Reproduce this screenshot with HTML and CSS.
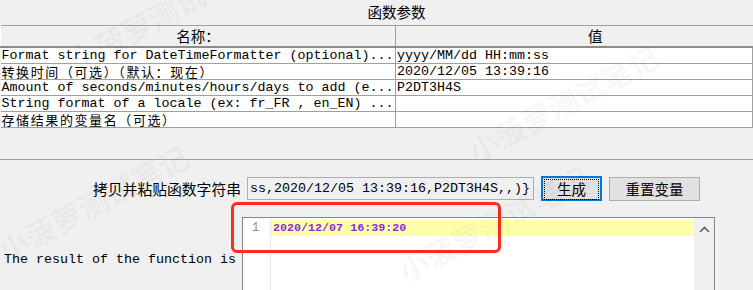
FILE: index.html
```html
<!DOCTYPE html>
<html lang="zh-CN">
<head>
    <meta charset="UTF-8">
    <title>函数参数</title>
    <link rel="stylesheet" href="styles.css">
</head>
<body>
    <div class="dialog">
        <!-- Title -->
        <div class="title">函数参数</div>

        <!-- Parameter table -->
        <table class="params">
            <tr>
                <th class="col-name">名称：</th>
                <th class="col-value">值</th>
            </tr>
            <tr>
                <td>Format string for DateTimeFormatter (optional)...</td>
                <td>yyyy/MM/dd HH:mm:ss</td>
            </tr>
            <tr>
                <td class="cn">转换时间（可选）（默认：现在）</td>
                <td>2020/12/05 13:39:16</td>
            </tr>
            <tr>
                <td>Amount of seconds/minutes/hours/days to add (e...</td>
                <td>P2DT3H4S</td>
            </tr>
            <tr>
                <td>String format of a locale (ex: fr_FR , en_EN) ...</td>
                <td></td>
            </tr>
            <tr>
                <td class="cn">存储结果的变量名（可选）</td>
                <td></td>
            </tr>
        </table>

        <div class="separator"></div>

        <!-- Function string -->
        <div class="copy-row">
            <label class="copy-label" for="funcString">拷贝并粘贴函数字符串</label>
            <div class="copy-input" id="funcString">ss,2020/12/05 13:39:16,P2DT3H4S,,)}</div>
            <button class="btn btn-focus"><span>生成</span></button>
            <button class="btn btn-reset">重置变量</button>
        </div>

        <!-- Result -->
        <div class="result-row">
            <div class="result-label">The result of the function is</div>
            <div class="editor">
                <div class="gutter">1</div>
                <div class="lines">
                    <div class="line-current">2020/12/07 16:39:20</div>
                </div>
                <div class="scrollbar">
                    <svg width="11" height="7" viewBox="0 0 11 7"><path d="M1 6 L5.5 1.5 L10 6" fill="none" stroke="#606060" stroke-width="1.6"/></svg>
                    <svg width="11" height="7" viewBox="0 0 11 7"><path d="M1 1 L5.5 5.5 L10 1" fill="none" stroke="#606060" stroke-width="1.6"/></svg>
                </div>
            </div>
        </div>

        <!-- Annotation -->
        <div class="highlight-box"></div>

        <!-- Watermarks -->
        <div class="wm wm1">小菠萝测试笔记</div>
        <div class="wm wm2">小菠萝测试笔记</div>
        <div class="wm wm3">小菠萝测试笔记</div>
        <div class="wm wm4">小菠萝测试笔记</div>
    </div>
</body>
</html>
```

FILE: styles.css
```css
/* General Styles */
body {
    margin: 0;
    background: #f0f0f0;
    overflow: hidden;
    font-family: "Noto Sans CJK SC", "Liberation Sans", sans-serif;
    color: #000;
}

.dialog {
    position: relative;
    width: 753px;
    height: 290px;
    overflow: hidden;
}

/* Title */
.title {
    height: 25px;
    line-height: 24px;
    text-align: center;
    padding-left: 40px;
    font-size: 14.5px;
}

/* Parameter table */
.params {
    width: 753px;
    border-collapse: collapse;
    table-layout: fixed;
    border-top: 1px solid #a0a0a0;
}
.params th {
    height: 20px;
    padding: 0;
    font-weight: normal;
    font-size: 14.5px;
    line-height: 20px;
    background: #f0f0f0;
    border-left: 1px solid #fff;
    border-right: 1px solid #a0a0a0;
    border-bottom: 2px solid #8c8c8c;
}
.params th.col-name {
    width: 394px;
}
.params th.col-value {
    padding-left: 42px;
    border-right: none;
}
.params td {
    height: 15px;
    padding: 0 0 0 1px;
    background: #fff;
    border-bottom: 1px solid #a0a0a0;
    border-right: 1px solid #a0a0a0;
    font-family: "Liberation Mono", "Noto Sans CJK SC", monospace;
    font-size: 13.33px;
    line-height: 15px;
    white-space: nowrap;
    overflow: hidden;
}
.params td.cn {
    font-family: "Noto Sans CJK SC", sans-serif;
    font-size: 13px;
    letter-spacing: 1.6px;
    overflow: visible;
}

.separator {
    margin-top: 31px;
    border-top: 1px solid #a0a0a0;
}

/* Function string row */
.copy-row {
    display: flex;
    align-items: center;
    margin-top: 16px;
    height: 25px;
}
.copy-label {
    width: 241px;
    text-align: right;
    margin-right: 6px;
    font-size: 14.8px;
}
.copy-input {
    width: 283px;
    height: 21px;
    border: 1px solid #adadad;
    background: #f0f0f0;
    font-family: "Liberation Mono", monospace;
    font-size: 13.33px;
    line-height: 21px;
    padding-left: 2px;
    white-space: nowrap;
    overflow: hidden;
    margin-right: 7px;
}
.btn {
    height: 24px;
    padding: 0;
    background: #e1e1e1;
    border: 1px solid #adadad;
    font-family: "Noto Sans CJK SC", sans-serif;
    font-size: 14.5px;
    color: #000;
}
.btn-focus {
    width: 61px;
    height: 25px;
    border: 2px solid #0078d7;
    margin-right: 7px;
    padding: 1px;
}
.btn-focus span {
    display: block;
    height: 100%;
    border: 1px dotted #000;
    line-height: 17px;
}
.btn-reset {
    width: 91px;
}

/* Result row */
.result-row {
    display: flex;
    margin-top: 16px;
}
.result-label {
    width: 238px;
    padding-left: 4px;
    margin-top: 35px;
    font-family: "Liberation Mono", monospace;
    font-size: 13.33px;
}
.editor {
    display: flex;
    width: 471px;
    height: 84px;
    border: 1px solid #828790;
    background: #fff;
}
.gutter {
    width: 18px;
    padding: 3px 0 0 9px;
    border-right: 1px solid #e8e8e8;
    font-family: "Liberation Mono", monospace;
    font-size: 12px;
    color: #888;
}
.lines {
    flex: 1;
    padding-top: 2px;
}
.line-current {
    height: 16px;
    line-height: 16px;
    padding-left: 2px;
    background: #ffffaa;
    font-family: "Liberation Mono", monospace;
    font-size: 11.7px;
    font-weight: bold;
    color: #8a2be2;
}
.scrollbar {
    width: 20px;
    background: #f0f0f0;
    display: flex;
    flex-direction: column;
    justify-content: space-between;
    align-items: center;
    padding: 8px 0 0;
    box-sizing: border-box;
}

/* Red annotation box */
.highlight-box {
    position: absolute;
    left: 231px;
    top: 202px;
    width: 264px;
    height: 45px;
    border: 3px solid #ff2a1f;
    border-radius: 6px;
}

/* Watermarks */
.wm {
    position: absolute;
    font-size: 30px;
    font-weight: bold;
    color: rgba(0, 0, 0, 0.04);
    white-space: nowrap;
    transform: rotate(-28deg);
    transform-origin: left center;
    pointer-events: none;
}
.wm1 { left: 70px; top: 40px; }
.wm2 { left: 470px; top: 130px; }
.wm3 { left: 0; top: 230px; }
.wm4 { left: 400px; top: 250px; }
```
